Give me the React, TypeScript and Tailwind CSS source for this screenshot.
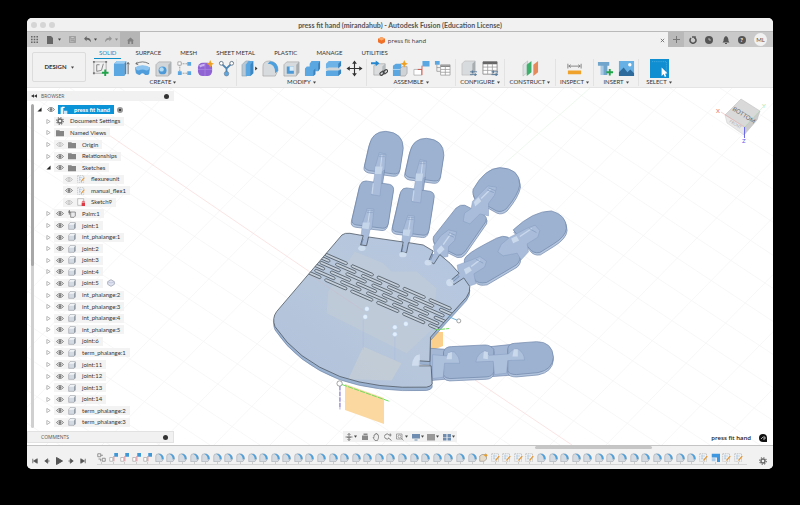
import type { ReactNode } from "react";

type TreeItem = {
  label: string;
  level: number;
  arrow?: "open" | "closed";
  eye?: "on" | "off";
  icon: string;
  extra?: boolean;
};

const body = (label: string): TreeItem => ({ label, level: 1, arrow: "closed", eye: "on", icon: "body" });

const tree: TreeItem[] = [
  { label: "press fit hand", level: 0, arrow: "open", eye: "on", icon: "root" },
  { label: "Document Settings", level: 1, arrow: "closed", icon: "gear" },
  { label: "Named Views", level: 1, arrow: "closed", icon: "folder" },
  { label: "Origin", level: 1, arrow: "closed", eye: "off", icon: "folder" },
  { label: "Relationships", level: 1, arrow: "closed", eye: "on", icon: "folder" },
  { label: "Sketches", level: 1, arrow: "open", eye: "on", icon: "folder" },
  { label: "flexureunit", level: 2, eye: "off", icon: "sketch" },
  { label: "manual_flex1", level: 2, eye: "on", icon: "sketch" },
  { label: "Sketch9", level: 2, eye: "off", icon: "locked" },
  { label: "Palm:1", level: 1, arrow: "closed", eye: "on", icon: "pinned" },
  body("joint:1"),
  body("int_phalange:1"),
  body("joint:2"),
  body("joint:3"),
  body("joint:4"),
  { ...body("joint:5"), extra: true },
  body("int_phalange:2"),
  body("int_phalange:3"),
  body("int_phalange:4"),
  body("int_phalange:5"),
  body("joint:6"),
  body("term_phalange:1"),
  body("joint:11"),
  body("joint:12"),
  body("joint:13"),
  body("joint:14"),
  body("term_phalange:2"),
  body("term_phalange:3"),
];

const tabs = ["SOLID", "SURFACE", "MESH", "SHEET METAL", "PLASTIC", "MANAGE", "UTILITIES"];

const groups = [
  { name: "CREATE", width: "w-[147px]", icons: ["newSketch", "extrude", "revolve", "hole", "pattern", "form", "derive"] },
  { name: "MODIFY", width: "w-[130px]", icons: ["press", "fillet", "shell", "combine", "split", "move"] },
  { name: "ASSEMBLE", width: "w-[89px]", icons: ["insertComp", "newComp", "joint", "table"] },
  { name: "CONFIGURE", width: "w-[49px]", icons: ["config", "configTable"] },
  { name: "CONSTRUCT", width: "w-[51px]", icons: ["planes"] },
  { name: "INSPECT", width: "w-[38px]", icons: ["measure"] },
  { name: "INSERT", width: "w-[45px]", icons: ["bolt", "image"] },
  { name: "SELECT", width: "w-[40px]", icons: ["select"] },
];

const timeline: string[] = [
  "group",
  ...Array(4).fill("joint"),
  ...Array(28).fill("fillet"),
  "star",
  ...Array(4).fill("sketch"),
  ...Array(14).fill("fillet"),
  "sketch",
  "combine",
  "sketch",
  "sketch",
];

// all ribbon icons share an 18x18 grid
const ribbonIcons: Record<string, ReactNode> = {
  newSketch: (
    <>
      <path d="M2 2H15V13M2 2V14H11" fill="none" stroke="#999" strokeWidth="0.800" />
      <path d="M5 12V5H8M5 12L10 11L12 4" fill="none" stroke="#777" strokeWidth="0.900" />
      <path d="M1 1h2v2H1zM14 1h2v2h-2zM1 13h2v2H1z" fill="#777" />
      <path d="M14 10V17M10.500 13.500H17.500" stroke="#20a34a" strokeWidth="2" />
    </>
  ),
  extrude: (
    <>
      <path d="M1 4L4 1H14L12 4V17H1Z" fill="#5aa7e2" />
      <path d="M1 4L4 1H14L12 4Z" fill="#9ccdf2" />
      <path d="M12 4L14 1V14L12 17Z" fill="#3c86c2" />
      <path d="M16 15V3M14.700 4.500L16 2.500L17.300 4.500" fill="none" stroke="#555" strokeWidth="0.900" />
    </>
  ),
  revolve: (
    <>
      <path d="M1 8Q9 4 17 8L16 15Q12 17 11 15Q9 13 7 15Q6 17 2 14Z" fill="#4f9edb" />
      <path d="M1 8Q9 3 17 8Q16 11 13 11Q9 9 5 11Q2 11 1 8Z" fill="#8cc4ef" />
      <path d="M2 4Q9 0 16 4M3.500 2L2 4L4.500 5" fill="none" stroke="#666" strokeWidth="0.900" />
    </>
  ),
  hole: (
    <>
      <path d="M1 5L4 2H17V14L14 17H1Z" fill="#d3d6d8" stroke="#999" strokeWidth="0.600" />
      <path d="M14 5L17 2V14L14 17Z" fill="#adb2b5" />
      <circle cx="8" cy="11" r="4.200" fill="#4b99d6" />
      <circle cx="7" cy="10" r="2.300" fill="#b2dbf6" />
    </>
  ),
  pattern: (
    <>
      <path d="M4 4V14M4 4H14M4 14H14" stroke="#888" strokeDasharray="2 1" strokeWidth="0.800" />
      <path d="M2 2h3.500v3.500H2z" fill="#fff" stroke="#888" strokeWidth="0.700" />
      <path d="M12 2h4v4h-4zM2 12h4v4H2zM12 12h4v4h-4z" fill="#5aa7e2" />
    </>
  ),
  form: (
    <>
      <rect x="1" y="3" width="15" height="14" rx="5" fill="#8f63d4" />
      <path d="M1 10H16M8.500 3V17" stroke="#a988e2" strokeWidth="0.800" />
      <path d="M3 7Q5 5 8 5.500" stroke="#c9b1f2" strokeWidth="2.500" fill="none" />
      <path d="M14 0L15.200 2.800L18 4L15.200 5.200L14 8L12.800 5.200L10 4L12.800 2.800Z" fill="#f0a020" />
    </>
  ),
  derive: (
    <>
      <path d="M4 4L9 9L14 4M9 9V14" fill="none" stroke="#4d86b5" strokeWidth="1.900" />
      <circle cx="3.500" cy="3.500" r="2" fill="#fff" stroke="#678" />
      <circle cx="14.500" cy="3.500" r="2" fill="#fff" stroke="#678" />
      <circle cx="9" cy="14.500" r="2.400" fill="#5aa7e2" stroke="#678" strokeWidth="0.600" />
    </>
  ),
  press: (
    <>
      <path d="M1 5L5 1H9V14L6 17H1Z" fill="#b9c8d4" stroke="#7b93a6" strokeWidth="0.500" />
      <path d="M5 5L8 1H13V14L10 17H5Z" fill="#5aa7e2" />
      <path d="M10 5L13 1V14L10 17Z" fill="#3c86c2" />
      <path d="M15 7L17.500 9L15 11Z" fill="#333" />
    </>
  ),
  fillet: (
    <>
      <path d="M1 17V7Q1 1 8 1Q17 2 17 11L14 17Z" fill="#d8dbdd" stroke="#999" strokeWidth="0.600" />
      <path d="M6 4Q14 4 14 14L17 11Q17 2 8.500 1.300Z" fill="#4c9fde" />
    </>
  ),
  shell: (
    <>
      <path d="M1 5L4 2H17V13L14 17H1Z" fill="#d8dbdd" stroke="#999" strokeWidth="0.600" />
      <path d="M14 5L17 2V13L14 17Z" fill="#a8adb0" />
      <path d="M4 7H11.500V14.500H4Z" fill="#4b99d6" />
      <path d="M7 7H11.500V11.500H7Z" fill="#d9edfa" />
    </>
  ),
  combine: (
    <>
      <path d="M6 4L8 1H17V9L15 12H12V15L10 17H1V9L3 7H6Z" fill="#5aa7e2" />
      <path d="M15 4L17 1V9L15 12ZM10 11L12 9V15L10 17Z" fill="#3a82bd" />
    </>
  ),
  split: (
    <>
      <path d="M1 4L4 1H17V6L14 9H1Z" fill="#6db3e8" />
      <path d="M1 12L4 10H17V14L14 17H1Z" fill="#5aa7e2" />
      <path d="M1 9.500L4 8H17L14 11H1Z" fill="#d0d5d8" />
      <path d="M14 4L17 1V6L14 9ZM14 12L17 10V14L14 17Z" fill="#3a82bd" />
    </>
  ),
  move: (
    <>
      <path d="M9 3V15M3 9H15" stroke="#333" strokeWidth="1.200" />
      <path d="M9 0.500L11.500 4H6.500ZM9 17.500L11.500 14H6.500ZM0.500 9L4 6.500V11.500ZM17.500 9L14 6.500V11.500Z" fill="#333" />
    </>
  ),
  insertComp: (
    <>
      <path d="M3 6L6 4H15V13L12 16H3Z" fill="#dadcde" stroke="#999" strokeWidth="0.600" />
      <path d="M12 7L15 4V13L12 16Z" fill="#b4b9bc" />
      <path d="M0 2.500H5V0.500L9 3.500L5 6.500V4.500H0Z" fill="#2487cf" />
      <g fill="none" stroke="#444" strokeWidth="1.200">
        <rect x="9" y="13" width="5" height="3" rx="1.500" transform="rotate(-40 11 14)" />
        <rect x="12.500" y="11" width="5" height="3" rx="1.500" transform="rotate(-40 15 12)" />
      </g>
    </>
  ),
  newComp: (
    <>
      <path d="M1 6L4 4H10V17H1Z" fill="#5aa7e2" />
      <path d="M9 9L11 7H16V14L14 17H9Z" fill="#cfd3d6" stroke="#999" strokeWidth="0.600" />
      <path d="M1 10H9" stroke="#b4daf5" />
      <path d="M13 0L14.200 2.800L17 4L14.200 5.200L13 8L11.800 5.200L9 4L11.800 2.800Z" fill="#f0a020" />
    </>
  ),
  joint: (
    <>
      <path d="M10 1h7.500v6h-7.500z" fill="#5aa7e2" />
      <path d="M1 10h8v6H1z" fill="#fff" stroke="#aaa" strokeWidth="0.800" />
      <path d="M9.500 6V16M5 10H9.500" stroke="#d24a3d" fill="none" strokeWidth="0.900" />
    </>
  ),
  table: (
    <>
      <path d="M1 1h5v4H1z" fill="#5aa7e2" />
      <path d="M3 5V12H7M3 8H7" fill="none" stroke="#888" strokeWidth="0.700" />
      <path d="M7 5H17V16H7Z" fill="#fff" stroke="#999" strokeWidth="0.800" />
      <path d="M7 6.500H17" stroke="#888" strokeWidth="2" />
      <path d="M7 10H17M7 13H17M12 7V16" stroke="#999" strokeWidth="0.800" />
    </>
  ),
  config: (
    <>
      <path d="M1 4L4 1H15V12L12 16H1Z" fill="#d8dbdd" stroke="#aaa" strokeWidth="0.500" />
      <path d="M12 4L15 1V12L12 16Z" fill="#a8adb0" />
      <path d="M9.500 12.500H17M9.500 15.500H17" stroke="#56799a" strokeWidth="0.900" />
      <path d="M12 11V14M15 14V17" stroke="#56799a" strokeWidth="1.300" />
    </>
  ),
  configTable: (
    <>
      <path d="M1 2H16V15H1Z" fill="#fff" stroke="#888" strokeWidth="0.900" />
      <path d="M1 3H16" stroke="#666" strokeWidth="3" />
      <path d="M1 7.500H16M1 11H16M6 4V15M11 4V15" stroke="#999" strokeWidth="0.800" />
      <path d="M10 12.500H17M10 15.500H17" stroke="#56799a" />
      <path d="M12 11V14M15 14V17" stroke="#56799a" strokeWidth="1.300" />
    </>
  ),
  planes: (
    <>
      <path d="M1 5L6 1V13L1 17Z" fill="#dfe2e4" stroke="#aaa" strokeWidth="0.500" />
      <path d="M5 5L10 1V13L5 17Z" fill="#3faf6c" />
      <path d="M12 5L17 1V13L12 17Z" fill="#e58a5b" />
    </>
  ),
  measure: (
    <>
      <path d="M2 11H16V15H2Z" fill="#f0a32c" />
      <path d="M2 4V9M16 4V9M3 6.500H15M5 5L3 6.500L5 8M13 5L15 6.500L13 8" fill="none" stroke="#777" strokeWidth="0.900" />
    </>
  ),
  bolt: (
    <>
      <path d="M1 2H13V6H11V16H4V6H1Z" fill="#72a5cc" />
      <path d="M4 6H7V16H4Z" fill="#a5cae6" />
      <path d="M13.500 9.500V16.500M10 13H17" stroke="#20a34a" strokeWidth="2" />
    </>
  ),
  image: (
    <>
      <path d="M1 1H17V17H1Z" fill="#67b0e6" />
      <path d="M1 13L6 8L10 13L13 10L17 14V17H1Z" fill="#2d6b9c" />
      <circle cx="12.500" cy="5" r="1.800" fill="#fff" />
    </>
  ),
  select: (
    <>
      <path d="M0 0H18V18H0Z" fill="#0f8fd2" />
      <path d="M2 2.500H15.500V13" fill="none" stroke="#7cc4ec" strokeWidth="0.500" strokeDasharray="1 1" />
      <path d="M11 8V16L13 14.300L14 17L15.400 16.300L14.300 14L16.500 13.500Z" fill="#fff" />
    </>
  ),
};

function RibbonIcon({ name }: { name: string }) {
  return (
    <button aria-label={name} className="shrink-0">
      <svg viewBox="0 0 18 18" className={name === "select" ? "size-[19px]" : "size-[17px]"}>
        {ribbonIcons[name]}
      </svg>
    </button>
  );
}

function Caret({ className = "text-[#444]" }: { className?: string }) {
  return (
    <svg viewBox="0 0 4 3" className={`h-[3px] w-[3px] shrink-0 ${className}`}>
      <path d="M0 0H4L2 3Z" fill="currentColor" />
    </svg>
  );
}

function Eye({ off }: { off: boolean }) {
  return (
    <button aria-label="Toggle visibility" className="flex w-3 shrink-0 justify-center">
      <svg viewBox="0 0 16 10" className="h-[5px] w-2" fill="none" stroke={off ? "#bbb" : "#777"} strokeWidth="1.800">
        <path d="M1 5Q8 -3 15 5Q8 13 1 5Z" />
        <circle cx="8" cy="5" r="2" fill={off ? "none" : "#777"} />
      </svg>
    </button>
  );
}

const treeIcons: Record<string, ReactNode> = {
  root: (
    <>
      <path d="M1 2H5V12H1Z" fill="#e9f5fc" />
      <path d="M6 7H11V12H6Z" fill="#cfe8f7" />
      <path d="M3 1H7V3H3Z" fill="#fff" />
    </>
  ),
  gear: (
    <g stroke="#666" fill="none">
      <circle cx="6" cy="6" r="3" strokeWidth="2" />
      <circle cx="6" cy="6" r="5" strokeWidth="1.600" strokeDasharray="2 1.900" />
    </g>
  ),
  folder: <path d="M0 2H5L6 3H12V11H0Z" fill="#858585" />,
  sketch: (
    <>
      <path d="M1 1H10V11H1Z" fill="#f4f7fa" stroke="#a5a5a5" strokeWidth="0.800" strokeDasharray="2 1" />
      <path d="M3 4H8M3 7H6M4 2V9" stroke="#9bbbd5" strokeWidth="0.800" />
      <path d="M6 10L11 4" stroke="#e39a3c" strokeWidth="1.600" />
    </>
  ),
  locked: (
    <>
      <path d="M1 1H10V11H1Z" fill="#fafafa" stroke="#999" strokeWidth="0.800" />
      <path d="M7 7H12V12H7Z" fill="#dc3a44" />
      <path d="M8 7V5H11V7" stroke="#dc3a44" fill="none" />
    </>
  ),
  pinned: (
    <>
      <path d="M4 3H11V9L9 11H4Z" fill="#e8eaec" stroke="#666" />
      <path d="M2 0V7M0 3H4" stroke="#444" />
    </>
  ),
  body: (
    <>
      <path d="M1 4L3 1H11V9L9 11H1Z" fill="#d3dae2" stroke="#8b9097" strokeWidth="0.800" />
      <path d="M1.500 4L3 1.500H10.500L9 4Z" fill="#f0f3f6" />
      <path d="M9 4L11 1V9L9 11Z" fill="#949ca6" />
    </>
  ),
};

function TreeRow({ item }: { item: TreeItem }) {
  const pad = ["pl-[6px]", "pl-[15px]", "pl-9"][item.level];
  const root = item.level === 0;
  return (
    <li className={`flex min-h-0 flex-1 items-center ${pad}`}>
      {item.arrow && (
        <button aria-label="Expand" className="flex w-3 shrink-0 justify-center">
          <svg viewBox="0 0 6 6" className="size-[5px]">
            {item.arrow === "open" ? (
              <path d="M5.500 0.500V5.500H0.500Z" fill="#222" />
            ) : (
              <path d="M1 0.500L5 3L1 5.500Z" fill="none" stroke="#999" strokeWidth="0.800" />
            )}
          </svg>
        </button>
      )}
      {root && <Eye off={false} />}
      <div className={`flex h-[9px] items-center ${root ? "ml-[1px] bg-[#0b93d8] pr-1 text-white" : "bg-[#f3f3f3] pr-1"}`}>
        {!root && item.eye && <Eye off={item.eye === "off"} />}
        <span className="flex w-3 shrink-0 justify-center">
          <svg viewBox="0 0 12 12" className="size-2">
            {treeIcons[item.icon]}
          </svg>
        </span>
        <span className={root ? "ml-1 font-bold" : "ml-1"}>{item.label}</span>
      </div>
      {root && (
        <input
          type="radio"
          aria-label="Activate component"
          defaultChecked
          className="ml-[3px] size-[6px] appearance-none rounded-full border-2 border-[#999] bg-[#222]"
        />
      )}
      {item.extra && (
        <svg viewBox="0 0 12 12" className="ml-1 size-2">
          <path d="M6 1L11 4V8L6 11L1 8V4Z" fill="#e0e4f2" stroke="#8f95a8" />
          <path d="M1 4L6 6L11 4" stroke="#b4bace" fill="none" />
        </svg>
      )}
    </li>
  );
}

// left offset of each row of flexure slots
const slotRows = [-9, 31, -14, 26, -19, 20];
const slotCols = [-1, 0, 1, 2, 3, 4, 5];
const palm =
  "M246 45Q255 38 270 40L310 47L302 75L320 77L326 51L430 66L424 96L440 98L446 68L490 75L520 93L507 122L522 132L540 104Q575 130 598 160L572 182L582 194L612 174L630 200Q632 215 620 232L512 352L510 425L478 423V438L514 438L517 492Q514 500 500 502Q350 508 240 470Q110 420 45 320Q35 295 50 275Z";

// one straight finger, drawn pointing up
function Finger({ x, y }: { x: number; y: number }) {
  const tip = "M88 75Q97 34 138 34Q190 38 190 85L180 150Q176 164 160 162L88 152Q73 148 74 137Z";
  const mid = "M60 195Q66 182 78 183L148 193Q162 197 161 210L145 312Q140 326 128 325L48 315Q34 312 36 299Z";
  return (
    <g transform={`translate(${x} ${y})`} stroke="#6c83a7" strokeWidth="2">
      <g fill="#b4c6df" transform="translate(-2 7)">
        <path d={tip} />
        <path d={mid} />
      </g>
      <path d={tip} fill="#9db2d0" />
      <path d={mid} fill="#9db2d0" />
      <path d="M112 150H134L128 190H104Z" fill="#9fb4d3" />
      <g fill="#a9bdda" stroke="#859cc0" strokeWidth="1.500">
        <path d="M118 98L138 102L134 150L128 154L120 228L94 224L104 165L106 140Z" />
        <path d="M82 265L102 268L96 325L90 330L80 378L60 375L66 325L68 308Z" />
      </g>
      <path d="M106 140H128L124 162H104ZM68 308H90L86 328L66 325Z" fill="#c5d5ea" stroke="none" />
      <path d="M126 104L122 140M90 270L84 308" stroke="#cddbee" strokeWidth="3" />
      <path d="M118 104H136M117 110H135M82 272H100M81 278H99" stroke="#8199be" strokeWidth="1.500" />
      <path d="M100 190L96 222" stroke="#c5d5ea" strokeWidth="4" />
    </g>
  );
}

function Scene() {
  return (
    <svg viewBox="27 88 746 357" preserveAspectRatio="xMidYMid slice" className="absolute inset-0 size-full" aria-label="Hand model">
      <g stroke="#f4f4f5" strokeWidth="0.700">
        {Array.from({ length: 26 }, (_, i) => (
          <path key={i} d={`M${-480 + i * 50} 88L${60 + i * 50} 445`} />
        ))}
        {Array.from({ length: 22 }, (_, i) => (
          <path key={i} d={`M${60 + i * 56} 88L${-290 + i * 56} 445`} />
        ))}
      </g>
      <path d="M100 129L310 272M475 380L572 445" stroke="#f9d9d9" strokeWidth="0.700" />
      <path d="M590 88L495 172" stroke="#e0f3e0" strokeWidth="0.600" />

      <path d="M345 384L384 398V424L345 410Z" fill="#fbd8a0" />
      <path d="M428 332H443V346L428 352Z" fill="#fbd08c" />

      <g transform="translate(340 120) scale(0.333)">
        <Finger x={0} y={0} />
        <Finger x={122} y={21} />
        <g stroke="#6c83a7" strokeWidth="2">
          <g fill="#b4c6df" transform="translate(2 7)">
            <path d="M400 208Q435 145 480 143Q540 145 540 195Q535 225 500 266Q485 279 470 273L410 240Q395 225 400 208Z" />
            <path d="M348 265Q362 252 375 256L432 285Q444 292 438 305L375 396Q365 409 350 406L290 376Q276 366 281 350Z" />
            <path d="M520 330Q580 273 635 273Q680 285 680 325Q678 350 640 373L600 398Q580 402 568 385Z" />
            <path d="M385 405Q395 393 470 355Q490 345 505 352L538 400Q546 420 530 435L440 488Q415 493 405 480L374 430Q370 415 385 405Z" />
          </g>
          <g fill="#9db2d0">
            <path d="M400 208Q435 145 480 143Q540 145 540 195Q535 225 500 266Q485 279 470 273L410 240Q395 225 400 208Z" />
            <path d="M348 265Q362 252 375 256L432 285Q444 292 438 305L375 396Q365 409 350 406L290 376Q276 366 281 350Z" />
            <path d="M520 330Q580 273 635 273Q680 285 680 325Q678 350 640 373L600 398Q580 402 568 385Z" />
            <path d="M385 405Q395 393 470 355Q490 345 505 352L538 400Q546 420 530 435L440 488Q415 493 405 480L374 430Q370 415 385 405Z" />
          </g>
          <g fill="#a9bdda" stroke="#859cc0" strokeWidth="1.500">
            <path d="M398 244L436 206L444 198L470 202L464 226L446 250L446 288L420 282L390 312L370 304L374 280L394 266Z" />
            <path d="M280 380L302 348L326 330L350 336L344 362L326 380L324 410L302 414L282 434L266 424L284 400Z" />
            <path d="M510 352L560 326L586 316L600 332L594 352L562 372L566 396L544 420L532 400L490 408L474 396L484 374Z" />
            <path d="M352 436L396 420L420 410L440 424L434 442L402 462L408 492L384 500L362 486L338 500L330 484L356 464Z" />
          </g>
          <path
            d="M402 246L416 232L424 244L406 260ZM290 392L304 376L314 388L298 404ZM514 356L530 348L538 362L520 370ZM372 448L388 440L396 452L378 464Z"
            fill="#cbd9ed"
            stroke="none"
          />
          <path d="M424 236L452 208M310 374L334 340M540 350L576 326M394 440L420 420" stroke="#cbd9ed" strokeWidth="4" />
          <path d="M446 204L466 212M442 210L462 218M328 338L346 346M324 344L342 352M568 326L590 338M408 418L430 430" stroke="#8199be" />
        </g>
      </g>

      <g transform="translate(330 300) scale(0.333)" stroke="#6c83a7" strokeWidth="2">
        <path d="M300 145L345 148V238L300 242Z" fill="#a4b8d6" />
        <path d="M482 140L540 134V226L486 230Z" fill="#a4b8d6" />
        <g fill="#b4c6df" transform="translate(0 7)">
          <path d="M341 155Q346 140 365 140L465 135Q482 135 492 148V215Q488 230 470 231L360 236Q345 236 341 225Z" />
          <path d="M534 145Q536 131 555 130L620 125Q668 125 671 172Q668 210 625 218L560 224Q536 224 534 212Z" />
        </g>
        <g fill="#9db2d0">
          <path d="M341 155Q346 140 365 140L465 135Q482 135 492 148V215Q488 230 470 231L360 236Q345 236 341 225Z" />
          <path d="M534 145Q536 131 555 130L620 125Q668 125 671 172Q668 210 625 218L560 224Q536 224 534 212Z" />
        </g>
        <g fill="#adc0dc" stroke="#859cc0" strokeWidth="1.500">
          <path d="M308 164L350 168Q358 152 374 156Q390 172 390 190H344L340 232L308 236Z" />
          <path d="M438 186Q442 158 468 152L478 166L536 162Q548 144 566 148Q584 160 584 180L534 182L530 220L494 224L490 184Z" />
        </g>
        <path d="M354 160L366 156V178L350 178ZM552 148L564 148V170L548 170ZM462 154L474 156V178L460 176Z" fill="#cbd9ed" stroke="none" />
      </g>

      <g transform="translate(260 220) scale(0.333)">
        <defs>
          <clipPath id="palm-clip">
            <path d={palm} />
          </clipPath>
          <linearGradient id="palm-fill" x1="0" y1="1" x2="1" y2="0">
            <stop offset="0" stopColor="#afc1db" />
            <stop offset="0.500" stopColor="#b8c7db" />
            <stop offset="1" stopColor="#b3c6e1" />
          </linearGradient>
        </defs>
        <path d={palm} fill="#9bb2d1" stroke="#6f86a9" strokeWidth="2" transform="translate(0 10)" />
        <path d={palm} fill="url(#palm-fill)" />
        <g clipPath="url(#palm-clip)">
          <path d="M285 95L370 130L395 155L470 155L530 205L515 330L440 400L330 345L200 280L205 215Z" fill="#c9cfd4" opacity="0.400" />
          <path d="M310 380L425 430L395 482L265 478Z" fill="#cad0d4" opacity="0.600" />
          <path d="M310 300V390M405 350V420" stroke="#9fb5e5" strokeWidth="2" opacity="0.500" />
          <path d="M150 165L310 272" stroke="#c9bccb" strokeWidth="1.500" />
          <g transform="translate(206 103) rotate(23.500)" fill="#c6d0dc" stroke="#4a545f" strokeWidth="2.200">
            {slotRows.map((offset, r) =>
              slotCols.map((c) => (
                <rect key={`${r}-${c}`} x={c * 85 + offset} y={r * 14} width={r === 0 || r === 5 ? 72 : 66} height="8" rx="4" />
              )),
            )}
          </g>
        </g>
        <path d={palm} fill="none" stroke="#4f5965" strokeWidth="2.400" />
        <g fill="#d4e2f3" opacity="0.850">
          <ellipse cx="306" cy="85" rx="11" ry="8" />
          <ellipse cx="429" cy="104" rx="11" ry="8" />
          <ellipse cx="505" cy="128" rx="11" ry="9" />
          <ellipse cx="570" cy="188" rx="11" ry="11" />
          <path d="M456 438Q458 405 480 403V438Z" />
        </g>
        <g fill="#e2effd" stroke="#a9c4e6">
          <circle cx="321" cy="267" r="7" />
          <circle cx="316" cy="291" r="7" />
          <circle cx="405" cy="322" r="7" />
          <circle cx="405" cy="343" r="7" />
          <circle cx="438" cy="312" r="7" />
        </g>
        <path d="M566 290L592 301" stroke="#6fb3dc" strokeWidth="3" />
        <circle cx="597" cy="303" r="6" fill="#fff" stroke="#777" strokeWidth="2" />
        <path d="M525 330L568 326" stroke="#6bdf5b" strokeWidth="3" strokeDasharray="14 3" />
        <path d="M246 494L390 545" stroke="#6bdf5b" strokeWidth="3" strokeDasharray="16 3" />
        <path d="M240 498V568" stroke="#8f83d4" strokeWidth="4" strokeDasharray="14 3" />
        <circle cx="239" cy="491" r="8" fill="#fff" stroke="#777" strokeWidth="2" />
      </g>

      <g>
        <path d="M741 99L760 111L745 127L725 115Z" fill="#d9d9d9" stroke="#bbb" strokeWidth="0.500" />
        <path d="M725 115L745 127L744 135L727 123Z" fill="#e9e9e9" stroke="#c9c9c9" strokeWidth="0.500" />
        <path d="M745 127L760 111L757 120L744 135Z" fill="#cbcbcb" stroke="#bbb" strokeWidth="0.500" />
        <path d="M721 112L744 127" stroke="#f0a0a0" strokeWidth="0.500" />
        <path d="M744 127L763 107" stroke="#b8e8b8" strokeWidth="0.500" />
        <path d="M744.500 127V138" stroke="#6b6bea" />
        <g className="font-['Lato',sans-serif]">
          <text x="732" y="110" fontSize="6" fill="#666" transform="rotate(32 732 110)">BOTTOM</text>
          <text x="729" y="122" fontSize="4" fill="#aaa" transform="rotate(32 729 122)">FRONT</text>
          <text x="716" y="113" fontSize="6" fill="#ef7070">X</text>
          <text x="762" y="108" fontSize="6" fill="#a5e6a5">Y</text>
          <text x="742" y="143" fontSize="6" fill="#5a5aec">Z</text>
        </g>
      </g>
    </svg>
  );
}

const navIcons: { name: string; caret?: boolean; art: ReactNode }[] = [
  { name: "Orbit", caret: true, art: <path d="M8 1V15M1 8H15M4 8Q8 12 12 8M5 4L8 1L11 4M5 12L8 15L11 12" fill="none" stroke="#777" strokeWidth="1.800" /> },
  { name: "Look at", art: <path d="M2 5H14V14H2ZM5 1H13V4H5Z" fill="#888" /> },
  { name: "Pan", art: <path d="M4 9V4H6V2H8V1H10V3H12V5H13V10L11 15H6L2 9Z" fill="#eee" stroke="#777" strokeWidth="1.500" /> },
  { name: "Zoom", art: <path d="M10 10A5 5 0 1 1 10 4M9 10L15 15M10 4H15M12.500 1V7" fill="none" stroke="#777" strokeWidth="1.800" /> },
  { name: "Fit", caret: true, art: <path d="M1 2H12V12H1ZM10 10L15 15M4 7A3 3 0 1 0 10 7A3 3 0 1 0 4 7" fill="#f7f7f7" stroke="#888" strokeWidth="1.500" /> },
  { name: "Display", caret: true, art: <path d="M0 2H16V11H0ZM5 13H11V15H5Z" fill="#6f8db0" /> },
  { name: "Grid", caret: true, art: <path d="M0 2H16V15H0Z" fill="#999" /> },
  { name: "Viewports", caret: true, art: <path d="M0 2H7V8H0ZM9 2H16V8H9ZM0 9H7V15H0ZM9 9H16V15H9Z" fill="#6e8cb0" /> },
];

const timelineIcons: Record<string, ReactNode> = {
  group: <path d="M1 1H5V5H1ZM2 8H5V11M7 7H11V11H7ZM5 3H8" fill="none" stroke="#777" />,
  joint: (
    <>
      <path d="M7 0H12V5H7Z" fill="#3f97d6" />
      <path d="M1 6H5V11H1Z" fill="#fff" stroke="#999" strokeWidth="0.800" />
      <path d="M6.500 4V11" stroke="#dc6f78" />
    </>
  ),
  fillet: (
    <>
      <path d="M1 11.500V4Q1 1 5 1Q11 1 11.500 8L9 11.500Z" fill="#d5dbe0" stroke="#9aa2a9" strokeWidth="0.700" />
      <path d="M4 1Q9 3 9 9L11.500 7.500Q11 1 4 1Z" fill="#4ba0de" />
    </>
  ),
  star: (
    <>
      <path d="M1 4L4 2H10V8L7 11H1Z" fill="#e6dccb" stroke="#8d867f" strokeWidth="0.800" />
      <path d="M9 0L10 2L12 3L10 4L9 6L8 4L6 3L8 2Z" fill="#f0a020" />
    </>
  ),
  sketch: treeIcons.sketch,
  combine: (
    <>
      <path d="M1 1H12V12H8V6H1Z" fill="#3f97e0" />
      <path d="M1 7H6V11H1Z" fill="#a9cdea" />
    </>
  ),
};

const playback = [
  { name: "Go to start", d: "M2 2V14M14 2L4 8L14 14Z" },
  { name: "Step back", d: "M10 2L2 8L10 14ZM10 8H15" },
  { name: "Play", d: "M3 1L15 8L3 15Z" },
  { name: "Step forward", d: "M6 2L14 8L6 14ZM1 8H6" },
  { name: "Go to end", d: "M14 2V14M2 2L12 8L2 14Z" },
];

export default function App() {
  return (
    <div className="flex min-h-screen flex-col bg-black px-[27px] pt-[18px] pb-9 font-['Lato',sans-serif] text-[6px] leading-[8px] text-[#333]">
      <main className="flex flex-1 flex-col overflow-hidden rounded-[5px] bg-white">
        <header className="relative flex h-[14px] shrink-0 items-center justify-center border-b border-[#b9b9b9] bg-[#f1f1f1]">
          <div className="absolute left-1 flex gap-[3px]">
            <span className="size-[6px] rounded-full bg-[#d5d5d5]" />
            <span className="size-[6px] rounded-full bg-[#d5d5d5]" />
            <span className="size-[6px] rounded-full bg-[#d5d5d5]" />
          </div>
          <h1 className="text-[7px] font-bold text-[#555]">press fit hand (mirandahub) - Autodesk Fusion (Education License)</h1>
        </header>

        {/* document tabs */}
        <div className="flex h-[15px] shrink-0 bg-[#c9c9c9]">
          <div className="flex w-[93px] items-center gap-1 pl-1 text-[#666]">
            <button aria-label="Data panel">
              <svg viewBox="0 0 9 9" className="size-[7px]"><path d="M0 0h2v2H0zM3.500 0h2v2h-2zM7 0h2v2H7zM0 3.500h2v2H0zM3.500 3.500h2v2h-2zM7 3.500h2v2H7zM0 7h2v2H0zM3.500 7h2v2h-2zM7 7h2v2H7z" fill="currentColor" /></svg>
            </button>
            <button aria-label="File" className="ml-1 flex items-center gap-1">
              <svg viewBox="0 0 8 8" className="size-2"><path d="M1 0H5L7 2V8H1Z" fill="currentColor" /></svg>
              <Caret />
            </button>
            <button aria-label="Save" className="ml-1">
              <svg viewBox="0 0 8 8" className="size-[7px]"><path d="M0.500 0.500H7.500V7.500H0.500ZM2 1V3H6V1M2 5H6V7" fill="#b5b5b5" stroke="#909090" strokeWidth="0.800" /></svg>
            </button>
            <button aria-label="Undo" className="ml-1 flex items-center gap-[3px]">
              <svg viewBox="0 0 8 8" className="size-[7px]"><path d="M0 3L3 0V2Q8 2 8 7Q6 4 3 4V6Z" fill="currentColor" /></svg>
              <Caret />
            </button>
            <button aria-label="Redo" className="ml-1 flex items-center gap-[3px]">
              <svg viewBox="0 0 8 8" className="size-[7px]"><path d="M8 3L5 0V2Q0 2 0 7Q2 4 5 4V6Z" fill="#959595" /></svg>
              <Caret className="text-[#888]" />
            </button>
          </div>
          <button aria-label="Home" className="flex w-5 items-center justify-center bg-[#b5b5b5] pt-[2px]">
            <svg viewBox="0 0 8 8" className="size-[7px]"><path d="M4 0.500L8 4H7V8H5V5H3V8H1V4H0Z" fill="#808080" /></svg>
          </button>
          <div className="relative flex flex-1 items-center justify-center gap-[3px] bg-[#f1f1f1] pt-[2px] pr-1">
            <svg viewBox="0 0 8 8" className="size-[7px]">
              <path d="M4 0L8 2V6L4 8L0 6V2Z" fill="#f07028" />
              <path d="M4 0L8 2L4 4L0 2Z" fill="#fba765" />
            </svg>
            <span className="font-['Open_Sans',sans-serif]">press fit hand</span>
            <button aria-label="Close tab" className="absolute right-[3px]">
              <svg viewBox="0 0 6 6" className="size-[5px]"><path d="M1 1L5 5M5 1L1 5" stroke="#666" /></svg>
            </button>
          </div>
          <button aria-label="New tab" className="flex w-4 items-center justify-center bg-[#b9b9b9]">
            <svg viewBox="0 0 7 7" className="size-[7px]"><path d="M3.500 0V7M0 3.500H7" stroke="#777" /></svg>
          </button>
          <div className="flex w-[89px] items-center justify-between pr-[6px] pl-[5px] text-[#555]">
            <button aria-label="Extensions"><svg viewBox="0 0 8 8" className="size-2"><path d="M2 2A3 3 0 1 0 6 2M3 1H6V3" fill="none" stroke="currentColor" strokeWidth="1.600" /></svg></button>
            <button aria-label="Job status"><svg viewBox="0 0 8 8" className="size-2"><circle cx="4" cy="4" r="4" fill="currentColor" /><path d="M4 2V4H6" stroke="#ccc" fill="none" strokeWidth="0.800" /></svg></button>
            <button aria-label="Notifications"><svg viewBox="0 0 8 8" className="size-2"><path d="M4 0Q6.500 1 6.500 5L7.500 6.500H0.500L1.500 5Q1.500 1 4 0ZM3 7H5V8H3Z" fill="currentColor" /></svg></button>
            <button aria-label="Help" className="size-2 rounded-full bg-[#555] font-bold text-white">?</button>
            <button className="size-[13px] rounded-full bg-[#f1f1f1]">ML</button>
          </div>
        </div>

        {/* ribbon */}
        <div className="flex h-[41px] shrink-0 border-b border-[#e4e4e4] bg-[#f1f1f1]">
          <button className="mt-[5px] ml-[5px] flex h-[30px] w-[54px] items-center justify-center gap-1 rounded-[2px] border border-[#dcdcdc] font-bold">
            DESIGN <Caret />
          </button>
          <div className="flex flex-col">
            <nav className="flex h-3 gap-[19px] pl-[13px]">
              {tabs.map((tab, i) => (
                <button key={tab} className={`whitespace-nowrap ${i === 0 ? "-mx-[5px] border-b border-[#0f8fc8] px-[5px] text-[#0f8fc8]" : "border-b border-transparent"}`}>
                  {tab}
                </button>
              ))}
            </nav>
            <div className="flex h-[27px] pl-1">
              {groups.map((group) => (
                <div key={group.name} className={`flex shrink-0 flex-col items-center justify-between border-r border-[#e2e2e2] last:border-0 ${group.width}`}>
                  <div className="flex h-[19px] items-center gap-1">
                    {group.icons.map((icon) => (
                      <RibbonIcon key={icon} name={icon} />
                    ))}
                  </div>
                  <button className="flex items-center gap-[2px] whitespace-nowrap">
                    {group.name} <Caret />
                  </button>
                </div>
              ))}
            </div>
          </div>
        </div>

        {/* canvas with the browser docked left */}
        <section className="relative flex flex-1">
          <Scene />
          <aside className="relative flex w-[147px] flex-col gap-[3px] pt-[3px] pb-[2px]">
            <div className="flex h-[10px] shrink-0 items-center bg-[#f1f1f1] pr-[5px] pl-1 font-['Open_Sans',sans-serif] text-[5px] text-[#555]">
              <svg viewBox="0 0 10 6" className="h-[4px] w-[6px]"><path d="M5 0V6L0 3ZM10 0V6L5 3Z" fill="#333" /></svg>
              <span className="ml-1">BROWSER</span>
              <button aria-label="Collapse browser" className="ml-auto size-[5px] rounded-full bg-[#333]" />
            </div>
            <div className="flex flex-1">
              <div className="-mr-[7px] ml-1 flex w-[3px] flex-col overflow-hidden rounded-full bg-[#d0d0d0]">
                <span className="h-1/2 rounded-full bg-[#a8a8a8]" />
              </div>
              <ul className="flex flex-1 flex-col">
                {tree.map((item) => (
                  <TreeRow key={item.label} item={item} />
                ))}
              </ul>
            </div>
            <div className="flex h-3 shrink-0 items-center border border-[#e2e2e2] bg-[#f1f1f1] pr-[5px] pl-[13px] font-['Open_Sans',sans-serif] text-[5px] text-[#555]">
              COMMENTS
              <button aria-label="Expand comments" className="ml-auto size-[5px] rounded-full bg-[#333]" />
            </div>
          </aside>

          <div className="absolute bottom-[3px] left-1/2 flex h-[11px] w-[114px] -translate-x-1/2 items-center justify-between bg-[#f1f1f1] px-[2px]">
            {navIcons.map((icon) => (
              <button key={icon.name} aria-label={icon.name} className="flex items-center gap-[1px]">
                <svg viewBox="0 0 16 16" className="size-2">{icon.art}</svg>
                {icon.caret && <Caret />}
              </button>
            ))}
          </div>
          <div className="absolute right-[6px] bottom-[3px] flex items-center gap-2 font-['Open_Sans',sans-serif] font-semibold text-[#222]">
            press fit hand
            <svg viewBox="0 0 8 8" className="size-2">
              <circle cx="4" cy="4" r="4" fill="#111" />
              <path d="M4 4H8V8H4Z" fill="#111" />
              <path d="M2 5L4 3L6 3V5H4" fill="none" stroke="#ddd" strokeWidth="0.800" />
            </svg>
          </div>
        </section>

        {/* timeline */}
        <footer className="flex h-6 shrink-0 border-t border-[#c4c4c4] bg-[#f1f1f1]">
          <div className="flex items-center gap-1 pt-[6px] pl-1">
            {playback.map((b) => (
              <button key={b.name} aria-label={b.name} className="flex w-2 justify-center">
                <svg viewBox="0 0 16 16" className={b.name === "Play" ? "size-2" : "size-[6px]"}>
                  <path d={b.d} fill="#555" stroke="#555" strokeWidth="2" />
                </svg>
              </button>
            ))}
          </div>
          <div className="ml-[10px] flex flex-1 flex-col">
            <div className="flex h-[3px] justify-end pr-[95px]">
              <span className="w-[117px] rounded-full bg-[#c6c6c6]" />
            </div>
            <ol className="flex h-4 items-start justify-between border-b border-[#d6d6d6] pt-1 pr-1">
              {timeline.map((type, i) => (
                <li key={i} className="flex flex-col items-center">
                  <svg viewBox="0 0 12 12" className="size-[9px]">{timelineIcons[type]}</svg>
                  <span className="h-[2px] w-px bg-[#ccc]" />
                </li>
              ))}
            </ol>
          </div>
          <button aria-label="Timeline settings" className="flex w-[26px] items-center justify-end pt-[6px] pr-[6px]">
            <svg viewBox="0 0 12 12" className="size-2">{treeIcons.gear}</svg>
          </button>
        </footer>
      </main>
    </div>
  );
}
